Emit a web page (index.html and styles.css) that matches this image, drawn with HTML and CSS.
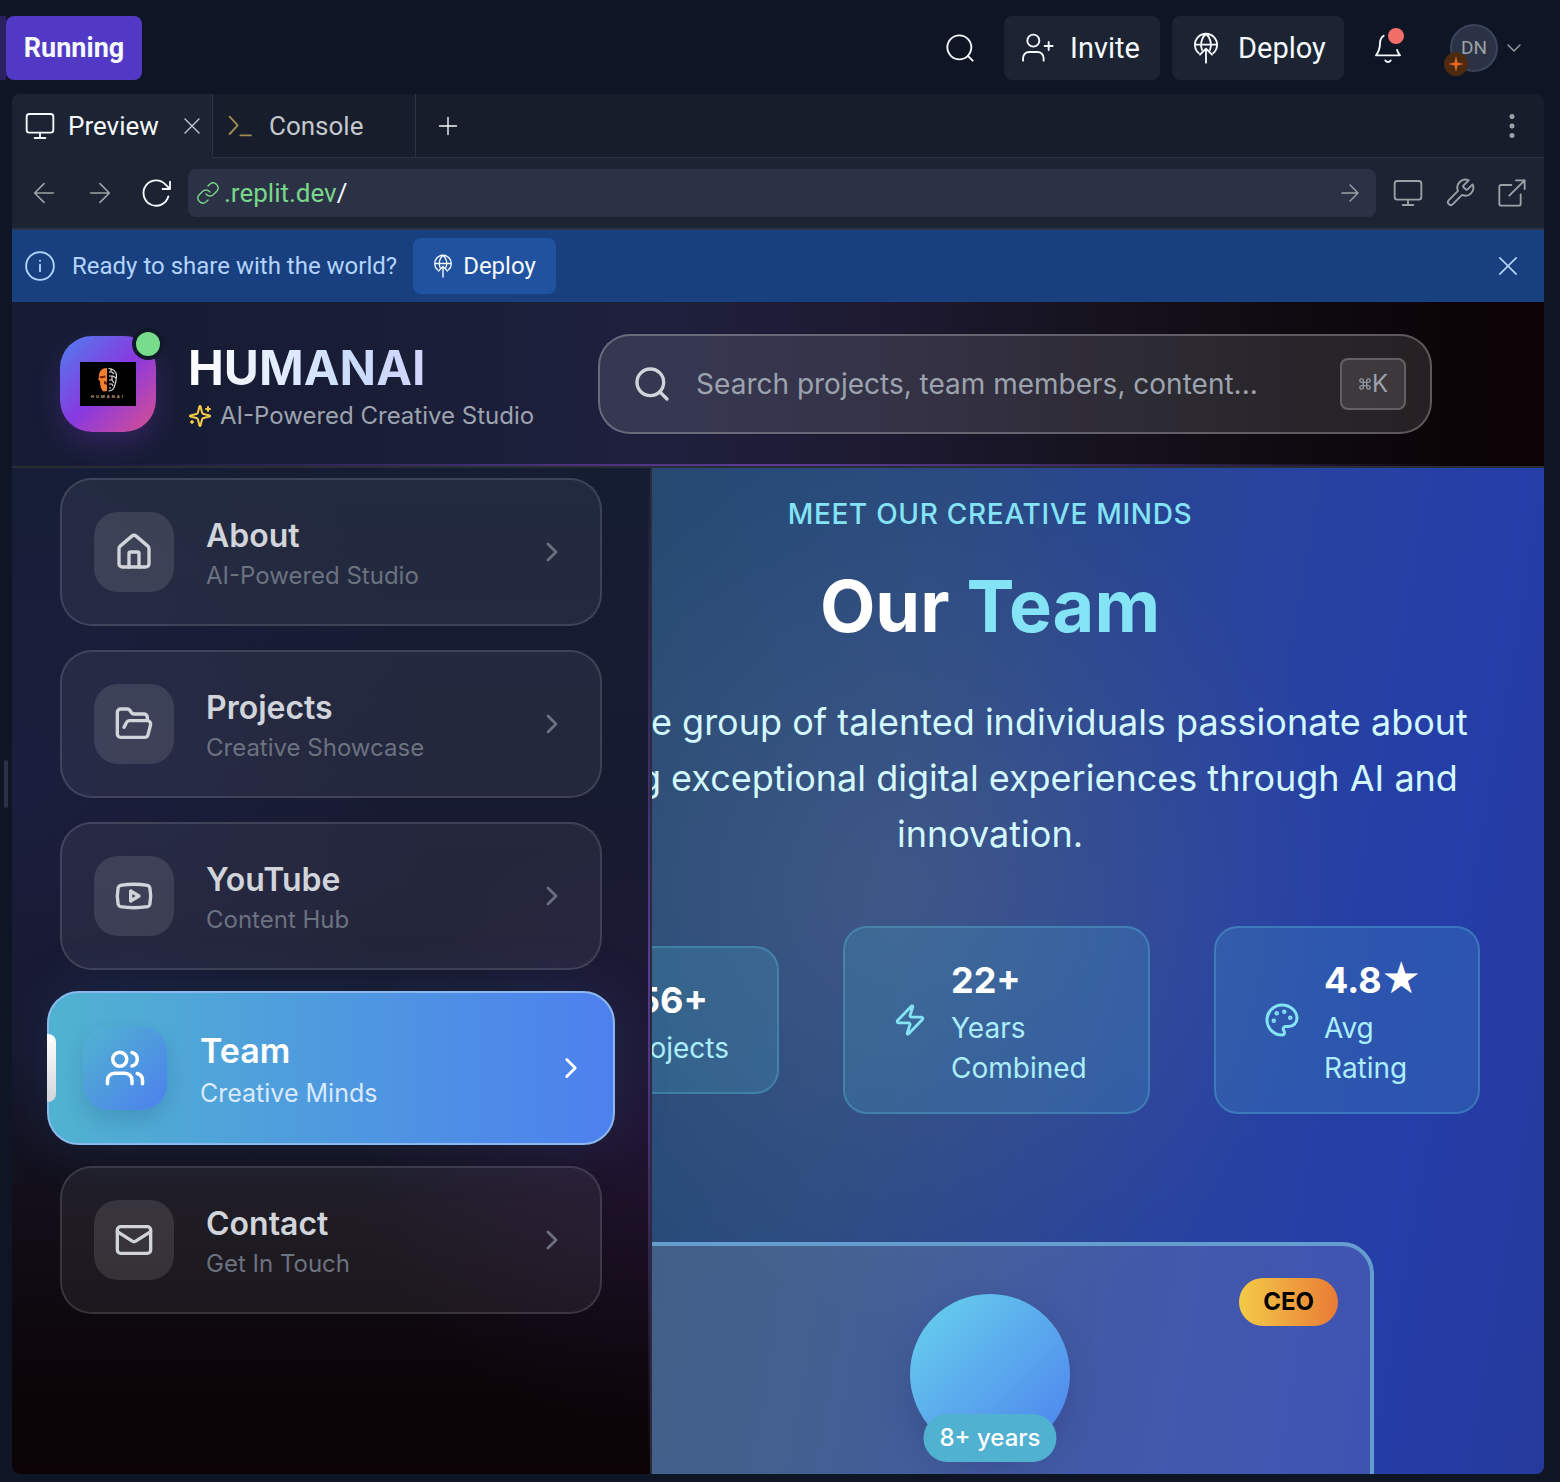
FILE: index.html
```html
<!DOCTYPE html>
<html lang="en">
<head>
<meta charset="utf-8">
<title>HumanAI preview</title>
<link rel="stylesheet" href="styles.css">
</head>
<body>
<svg class="defs" aria-hidden="true">
  <symbol id="i-search" viewBox="0 0 24 24"><circle cx="11" cy="11" r="8"/><path d="m21 21-4.3-4.3"/></symbol>
  <symbol id="i-find" viewBox="0 0 24 24"><circle cx="11.500" cy="11.500" r="9"/><path d="m21.500 21.500-3.600-3.600"/></symbol>
  <symbol id="i-monitor" viewBox="0 0 24 24"><rect x="2" y="3" width="20" height="14" rx="2"/><path d="M8 21h8M12 17v4"/></symbol>
  <symbol id="i-chevron" viewBox="0 0 24 24"><path d="m9 18 6-6-6-6"/></symbol>
  <symbol id="i-x" viewBox="0 0 24 24"><path d="M5 5l14 14M19 5L5 19"/></symbol>
  <symbol id="i-arrow" viewBox="0 0 24 24"><path d="M4 12h16M12 4l8 8-8 8"/></symbol>
  <symbol id="i-deploy" viewBox="0 0 24 24"><path d="M6.500 15.800A8.300 8.300 0 1 1 17.500 15.800M3.800 9.500h16.400M9 13.500c-1.600-4-.5-9 3-12.200 3.500 3.200 4.600 8.200 3 12.200M12 23V12.500M7.500 17 12 12.500l4.500 4.500"/></symbol>
</svg>

<header class="topbar">
  <span class="strip"></span>
  <button class="running" type="button">Running</button>
  <div class="actions">
    <button class="plain" type="button" aria-label="Search"><svg class="ic s32 thin"><use href="#i-find"/></svg></button>
    <button class="tool invite" type="button"><svg class="ic s32 thin" viewBox="0 0 24 24"><circle cx="8.500" cy="6.500" r="4.500"/><path d="M.8 21.500v-2a4.500 4.500 0 0 1 4.500-4.500h6.400a4.500 4.500 0 0 1 4.500 4.500v2M20 7.500v6M17 10.500h6"/></svg>Invite</button>
    <button class="tool publish" type="button"><svg class="ic s32 thin"><use href="#i-deploy"/></svg>Deploy</button>
    <button class="plain bell" type="button" aria-label="Notifications"><svg class="ic s32 thin" viewBox="0 0 24 24"><path d="M8.800 2.800C7 4 6 6 6 8.500c0 4-1 6.500-3 9h18c-1-1.200-1.800-2.500-2.200-4M10 21.300c1 1.600 3 1.600 4 0"/></svg><i class="alert"></i></button>
    <button class="account" type="button"><span class="avatar">DN<svg class="spark" viewBox="0 0 24 24"><circle cx="12" cy="12" r="12"/><path d="M12 4l1.500 6.500L20 12l-6.500 1.500L12 20l-1.500-6.500L4 12l6.500-1.500z"/></svg></span><svg class="ic s24 thin down"><use href="#i-chevron"/></svg></button>
  </div>
</header>

<div class="workspace">
<div class="pane">
  <div class="tabs">
    <button class="tab active" type="button"><svg class="ic s32 thin"><use href="#i-monitor"/></svg>Preview<svg class="ic s24 thin close"><use href="#i-x"/></svg></button>
    <button class="tab" type="button"><svg class="ic s32 thin prompt" viewBox="0 0 24 24"><path d="M3.500 5l6 6.500-6 6.500M11.500 19h8"/></svg>Console</button>
    <button class="add" type="button" aria-label="New tab"><svg class="ic s24 thin" viewBox="0 0 24 24"><path d="M12 3.500v17M3.500 12h17"/></svg></button>
    <button class="more" type="button" aria-label="More"><svg class="s32" viewBox="0 0 32 32" fill="currentColor"><circle cx="16" cy="6.500" r="2.500"/><circle cx="16" cy="16" r="2.500"/><circle cx="16" cy="25.500" r="2.500"/></svg></button>
  </div>
  <div class="urlbar">
    <button class="nav dim" type="button" aria-label="Back"><svg class="ic s28 thin flip"><use href="#i-arrow"/></svg></button>
    <button class="nav dim" type="button" aria-label="Forward"><svg class="ic s28 thin"><use href="#i-arrow"/></svg></button>
    <button class="nav" type="button" aria-label="Reload"><svg class="ic s32 thin" viewBox="0 0 24 24"><path d="M21.300 14.500A9.500 9.500 0 1 1 19 5.500l3.500 3.500M22.500 3.500V9H17"/></svg></button>
    <a class="address" href="#"><svg class="ic s24 thin" viewBox="0 0 24 24"><path d="M10 13a5 5 0 0 0 7.500.5l3.500-3.500a5 5 0 0 0-7-7l-2 2M14 11a5 5 0 0 0-7.500-.5L3 14a5 5 0 0 0 7 7l2-2"/></svg><span class="url">.replit.dev<b>/</b></span><svg class="ic s24 thin go"><use href="#i-arrow"/></svg></a>
    <div class="tools">
    <button class="nav small" type="button" aria-label="Devices"><svg class="ic s32 thin"><use href="#i-monitor"/></svg></button>
    <button class="nav small" type="button" aria-label="Tools"><svg class="ic s32 thin" viewBox="0 0 24 24"><path d="M14.700 6.300a1 1 0 0 0 0 1.400l1.600 1.600a1 1 0 0 0 1.400 0l3.770-3.770a6 6 0 0 1-7.940 7.940l-6.910 6.910a2.120 2.120 0 0 1-3-3l6.910-6.910a6 6 0 0 1 7.940-7.940l-3.760 3.760z"/></svg></button>
    <button class="nav small" type="button" aria-label="Open in new tab"><svg class="ic s32 thin" viewBox="0 0 24 24"><path d="M18.500 13v7a1.500 1.500 0 0 1-1.500 1.500H4A1.500 1.500 0 0 1 2.500 20V7.500A1.500 1.500 0 0 1 4 6h7.500M15 2.500h6.500V9M10 14 21.500 2.500"/></svg></button>
    </div>
  </div>
  <div class="banner">
    <svg class="ic s32 thin" viewBox="0 0 24 24"><circle cx="12" cy="12" r="10.400"/><path d="M12 11v5M12 8v.2"/></svg>
    <span>Ready to share with the world?</span>
    <button class="deploy" type="button"><svg class="ic s24 thin"><use href="#i-deploy"/></svg>Deploy</button>
    <button class="dismiss" type="button" aria-label="Dismiss"><svg class="ic s28 thin"><use href="#i-x"/></svg></button>
  </div>

  <div class="app">
    <header class="apphead">
      <div class="logo">
        <svg viewBox="0 0 56 44"><rect width="56" height="44"/><path d="M27 6c-5 0-8 3-8 8 0 2-1 3-.5 4l1.500 1c0 4 1 9 3.500 10.500L27 29z" fill="#f08030"/><path d="M19.500 14.500l6-1v2l-5 1zM24 19l3 1v3l-3-1z" fill="#70200c"/><path d="M28.500 6.500c4 0 8 2.500 8 7.500 0 5-1 8-2.500 11.500-1 2-3 3.500-5.500 3.500M29 10h3l2 2M29 14h4l3 2M29 18h3l2 3M29 22h3l1 2M31 7v3M32 14v4M29 26h2" fill="none" stroke="#ddd" stroke-width="1.200"/><text x="28" y="36" text-anchor="middle">HUMANAI</text></svg>
        <i class="online"></i>
      </div>
      <div class="brand">
        <h1>HUMANAI</h1>
        <p><svg class="ic s24" viewBox="0 0 24 24"><path d="M9.940 15.500A2 2 0 0 0 8.500 14.060l-6.140-1.580a.5.5 0 0 1 0-.96L8.500 9.940A2 2 0 0 0 9.940 8.500l1.580-6.140a.5.5 0 0 1 .96 0L14.060 8.500A2 2 0 0 0 15.500 9.940l6.140 1.580a.5.5 0 0 1 0 .96L15.500 14.060a2 2 0 0 0-1.440 1.440l-1.580 6.140a.5.5 0 0 1-.96 0zM20 3v4M22 5h-4M4 17v2M5 18H3"/></svg>AI-Powered Creative Studio</p>
      </div>
      <label class="search">
        <svg class="ic s40"><use href="#i-search"/></svg>
        <input type="text" aria-label="Search" placeholder="Search projects, team members, content...">
        <kbd><svg class="ic cmd" viewBox="0 0 24 24"><path d="M15 6v12a3 3 0 1 0 3-3H6a3 3 0 1 0 3 3V6a3 3 0 1 0-3 3h12a3 3 0 1 0-3-3"/></svg>K</kbd>
      </label>
    </header>

    <div class="body">
      <nav class="side">
        <a class="item" href="#"><span class="box"><svg class="ic s40" viewBox="0 0 24 24"><path d="M15 21v-8a1 1 0 0 0-1-1h-4a1 1 0 0 0-1 1v8"/><path d="M3 10a2 2 0 0 1 .7-1.530l7-6a2 2 0 0 1 2.600 0l7 6A2 2 0 0 1 21 10v9a2 2 0 0 1-2 2H5a2 2 0 0 1-2-2z"/></svg></span><span class="label"><strong>About</strong><small>AI-Powered Studio</small></span><svg class="ic s32 chev"><use href="#i-chevron"/></svg></a>
        <a class="item" href="#"><span class="box"><svg class="ic s40" viewBox="0 0 24 24"><path d="m6 14 1.500-2.900A2 2 0 0 1 9.240 10H20a2 2 0 0 1 1.940 2.500l-1.540 6a2 2 0 0 1-1.950 1.500H4a2 2 0 0 1-2-2V5a2 2 0 0 1 2-2h3.900a2 2 0 0 1 1.690.9l.81 1.200a2 2 0 0 0 1.670.9H18a2 2 0 0 1 2 2v2"/></svg></span><span class="label"><strong>Projects</strong><small>Creative Showcase</small></span><svg class="ic s32 chev"><use href="#i-chevron"/></svg></a>
        <a class="item" href="#"><span class="box"><svg class="ic s40" viewBox="0 0 24 24"><path d="M2.500 17a24.120 24.120 0 0 1 0-10 2 2 0 0 1 1.400-1.400 49.560 49.560 0 0 1 16.200 0A2 2 0 0 1 21.500 7a24.120 24.120 0 0 1 0 10 2 2 0 0 1-1.400 1.400 49.550 49.550 0 0 1-16.200 0A2 2 0 0 1 2.500 17"/><path d="m10 15 5-3-5-3z"/></svg></span><span class="label"><strong>YouTube</strong><small>Content Hub</small></span><svg class="ic s32 chev"><use href="#i-chevron"/></svg></a>
        <a class="item current" href="#" aria-current="page"><span class="box"><svg class="ic s42" viewBox="0 0 24 24"><path d="M16 21v-2a4 4 0 0 0-4-4H6a4 4 0 0 0-4 4v2"/><circle cx="9" cy="7" r="4"/><path d="M22 21v-2a4 4 0 0 0-3-3.870M16 3.130a4 4 0 0 1 0 7.750"/></svg></span><span class="label"><strong>Team</strong><small>Creative Minds</small></span><svg class="ic s34 chev"><use href="#i-chevron"/></svg></a>
        <a class="item" href="#"><span class="box"><svg class="ic s40" viewBox="0 0 24 24"><rect x="2" y="4" width="20" height="16" rx="2"/><path d="m22 7-8.970 5.700a1.940 1.940 0 0 1-2.060 0L2 7"/></svg></span><span class="label"><strong>Contact</strong><small>Get In Touch</small></span><svg class="ic s32 chev"><use href="#i-chevron"/></svg></a>
      </nav>

      <main class="main">
        <p class="eyebrow">MEET OUR CREATIVE MINDS</p>
        <h2>Our <em>Team</em></h2>
        <p class="lead">A diverse group of talented individuals passionate about creating exceptional digital experiences through AI and innovation.</p>
        <div class="stats">
          <div class="stat"><svg class="ic s36" viewBox="0 0 24 24"><circle cx="12" cy="12" r="10"/><circle cx="12" cy="12" r="5"/></svg><p><b>156+</b>Projects</p></div>
          <div class="stat"><svg class="ic s34" viewBox="0 0 24 24"><path d="M4 14a1 1 0 0 1-.78-1.630l9.900-10.200a.5.5 0 0 1 .86.460l-1.920 6.020A1 1 0 0 0 13 10h7a1 1 0 0 1 .78 1.630l-9.900 10.200a.5.5 0 0 1-.86-.460l1.920-6.020A1 1 0 0 0 11 14z"/></svg><p><b>22+</b>Years Combined</p></div>
          <div class="stat"><svg class="ic s36" viewBox="0 0 24 24"><g fill="currentColor"><circle cx="13.500" cy="6.500" r=".5"/><circle cx="17.500" cy="10.500" r=".5"/><circle cx="8.500" cy="7.500" r=".5"/><circle cx="6.500" cy="12.500" r=".5"/></g><path d="M12 2C6.500 2 2 6.500 2 12s4.500 10 10 10c.93 0 1.650-.75 1.650-1.690 0-.44-.18-.83-.44-1.120-.29-.29-.44-.65-.44-1.130a1.640 1.640 0 0 1 1.670-1.670h2c3.050 0 5.550-2.500 5.550-5.550C22 6.010 17.460 2 12 2z"/></svg><p><b>4.8<span class="star">★</span></b>Avg<br>Rating</p></div>
        </div>
        <article class="profile">
          <span class="role">CEO</span>
          <div class="photo"><span class="years">8+ years</span></div>
        </article>
      </main>
    </div>
  </div>
</div>
</div>
</body>
</html>
```
FILE: styles.css
```css
* { box-sizing: border-box; }
body {
  margin: 0;
  height: 100vh;
  display: flex;
  flex-direction: column;
  overflow: hidden;
  background: #0e1525;
  color: #f5f9fc;
  font: 26px/32px Roboto, "Noto Sans", sans-serif;
}
h1, h2, p { margin: 0; }
button { font: inherit; color: inherit; background: none; border: 0; padding: 0; cursor: pointer; }
a { color: inherit; text-decoration: none; }
.defs { position: absolute; width: 0; height: 0; }
.ic { fill: none; stroke: currentColor; stroke-width: 2; stroke-linecap: round; stroke-linejoin: round; flex: none; }
.thin { stroke-width: 1.4; }
.s24 { width: 24px; height: 24px; }
.s28 { width: 28px; height: 28px; }
.s32 { width: 32px; height: 32px; }
.s34 { width: 34px; height: 34px; }
.s36 { width: 36px; height: 36px; }
.s40 { width: 40px; height: 40px; }
.s42 { width: 42px; height: 42px; }
.flip { transform: rotate(180deg); }
.down { transform: rotate(90deg); }

/* Workspace top bar */
.topbar { display: flex; height: 94px; padding: 16px 34px 14px 0; flex: none; }
.strip { width: 6px; height: 64px; background: #2b2160; }
.running { width: 136px; height: 64px; border-radius: 8px; background: #5139c6; font-size: 27px; font-weight: 700; }
.actions { display: flex; align-items: center; gap: 12px; margin-left: auto; height: 64px; }
.plain { width: 64px; height: 64px; display: grid; place-items: center; position: relative; }
.tool { display: flex; align-items: center; gap: 16px; height: 64px; padding: 0 18px; border-radius: 8px; background: #1c2333; font-size: 29px; }
.invite { width: 156px; }
.publish { width: 172px; }
.alert { position: absolute; right: 16px; top: 12px; width: 16px; height: 16px; border-radius: 50%; background: #ef6e68; }
.account { display: flex; align-items: center; gap: 4px; margin-left: 18px; color: #9da2a6; }
.avatar { position: relative; display: grid; place-items: center; width: 48px; height: 48px; border: 2px solid #3c445c; border-radius: 50%; background: #2b3245; font-size: 19px; }
.spark { position: absolute; left: -8px; bottom: -6px; width: 24px; height: 24px; }
.spark circle { fill: #4b2a10; }
.spark path { fill: #e8672c; }

/* Preview pane */
.workspace { flex: 1; min-height: 0; display: flex; padding: 0 16px 8px 12px; position: relative; }
.workspace::before { content: ""; position: absolute; left: 4px; top: 666px; width: 4px; height: 48px; border-radius: 2px; background: #2b3245; }
.pane { flex: 1; min-width: 0; display: flex; flex-direction: column; overflow: hidden; border-radius: 8px; background: #1c2333; }
.tabs { display: flex; height: 64px; flex: none; background: #171d2b; }
.tab { display: flex; align-items: center; gap: 12px; width: 203px; padding: 0 12px; border-right: 1px solid #2b3245; border-bottom: 1px solid #2b3245; color: #c2c8cc; }
.tab.active { width: 201px; background: #1c2333; border-bottom-color: #1c2333; color: #f5f9fc; }
.close { margin-left: auto; margin-right: -4px; color: #c2c8cc; }
.prompt { color: #a08c50; }
.add, .more { width: 64px; display: grid; place-items: center; border-bottom: 1px solid #2b3245; }
.more { flex: 1; justify-items: end; padding-right: 16px; color: #9da2a6; }
.urlbar { display: flex; align-items: center; height: 72px; flex: none; padding: 0 6px 0 4px; border-bottom: 2px solid #2b3245; }
.nav { width: 56px; height: 56px; display: grid; place-items: center; }
.nav.small { width: 52px; }
.dim, .tools { color: #9da2a6; }
.tools { display: flex; margin-left: 6px; }
.address { display: flex; align-items: center; gap: 4px; flex: 1; height: 48px; margin-left: 4px; padding: 0 14px 0 8px; border-radius: 8px; background: #2b3245; color: #7ad68a; }
.url b { font-weight: 400; color: #f5f9fc; }
.go { margin-left: auto; color: #9da2a6; }
.banner { display: flex; align-items: center; gap: 16px; height: 72px; flex: none; padding: 0 22px 0 12px; background: #18407e; color: #b2d4ff; font-size: 24px; }
.deploy { display: flex; align-items: center; gap: 8px; height: 56px; min-width: 143px; padding: 0 18px; border-radius: 8px; background: #2052a0; color: #f5f9fc; }
.dismiss { display: flex; margin-left: auto; }

/* Previewed application */
.app { flex: 1; min-height: 0; display: flex; flex-direction: column; font-family: Inter, sans-serif; }
.apphead {
  position: relative; z-index: 3; display: flex; align-items: center; flex: none;
  padding: 32px 112px 32px 48px;
  border-bottom: 2px solid #2a2c36;
  background: linear-gradient(90deg, #151c33 0%, #181d35 20%, #1e203d 42%, #1d1930 58%, #15121d 72%, #0e0a10 84%, #0b0305 97%);
}
.apphead::after { content: ""; position: absolute; left: 0; right: 0; bottom: 0; height: 2px; background: linear-gradient(90deg, transparent 5%, #5d3a97 50%, transparent 95%); }
.logo { position: relative; display: grid; place-items: center; width: 96px; height: 96px; border-radius: 32px; background: linear-gradient(135deg, #4f7fee, #8839e0 50%, #d9508e); box-shadow: 0 12px 28px #8839e040; }
.logo svg { width: 56px; height: 44px; }
.logo text { font: 700 4px Inter, sans-serif; fill: #c8a888; letter-spacing: 2px; }
.online { position: absolute; right: -8px; top: -8px; width: 32px; height: 32px; border: 4px solid #111827; border-radius: 50%; background: #79dc8c; }
.brand { margin: 0 64px 0 32px; white-space: nowrap; }
.brand h1 { width: max-content; font-size: 48px; line-height: 64px; font-weight: 700; background: linear-gradient(90deg, #fff, #c9dcfb 70%, #d3d5fc); -webkit-background-clip: text; background-clip: text; color: transparent; }
.brand p { display: flex; align-items: center; gap: 8px; font-size: 24px; line-height: 32px; color: #9ca3af; }
.brand p svg { color: #f5cc48; }
.search { flex: 1; min-width: 0; display: flex; align-items: center; gap: 24px; height: 100px; padding: 0 24px 0 32px; border: 2px solid #ffffff40; border-radius: 32px; background: #ffffff1c; color: #d1d5db; }
.search input { flex: 1; min-width: 0; padding: 0; border: 0; outline: 0; background: none; color: inherit; font: 28px/40px Inter, sans-serif; }
.search input::placeholder { color: #9ca3af; opacity: 1; }
.search kbd { display: flex; align-items: center; height: 52px; padding: 0 16px; border: 2px solid #ffffff33; border-radius: 8px; background: #ffffff1a; color: #9ca3af; font: 24px/32px Inter, sans-serif; }
.cmd { width: 14px; height: 14px; }

.body { flex: 1; min-height: 0; display: flex; overflow: hidden; }
.side {
  position: relative; z-index: 2; flex: none; width: 640px; display: flex; flex-direction: column; gap: 24px;
  padding: 10px 48px 0;
  border-right: 2px solid #2a2c3a;
  background:
    radial-gradient(circle at 100% 66%, #4a1d6a40, transparent 300px),
    radial-gradient(circle at 0 30%, #2425584d, transparent 420px),
    linear-gradient(180deg, #151d33 0%, #171a30 40%, #151629 58%, #110d16 76%, #0b0508 92%, #0b0305 100%);
}
.side::after { content: ""; position: absolute; right: 0; top: 0; bottom: 0; width: 2px; background: linear-gradient(transparent, #5d3a97 50%, transparent); }
.item { display: flex; align-items: center; gap: 32px; height: 148px; padding: 0 32px; border: 2px solid #ffffff1f; border-radius: 32px; background: #ffffff0f; }
.box { display: grid; place-items: center; width: 80px; height: 80px; border-radius: 24px; background: #ffffff1c; color: #d1d5db; }
.label { flex: 1; display: flex; flex-direction: column; }
.label strong { font-size: 32px; line-height: 48px; font-weight: 600; color: #d1d5db; }
.label small { font-size: 24px; line-height: 32px; color: #6b7280; }
.chev { color: #6b7280; }
.item.current { position: relative; gap: 33px; height: 154px; margin: -3px -13px; padding: 0 25px 0 34px; border-color: #8cb8f0; background: linear-gradient(90deg, #50b3d0, #4d80ee) border-box; box-shadow: 0 0 56px #2f6fa833; }
.item.current::before { content: ""; position: absolute; left: -2px; top: 41px; width: 9px; height: 68px; border-radius: 0 8px 8px 0; background: linear-gradient(#fff, #d1d5db); }
.current .box { width: 84px; height: 84px; border-radius: 26px; background: linear-gradient(135deg, #50b3d0, #4d80ee); box-shadow: 0 10px 20px #1a3f6a33; color: #fff; }
.current strong, .current .chev { color: #fff; }
.current strong { font-size: 34px; line-height: 50px; }
.current small { font-size: 25px; line-height: 34px; color: #dbeafe; }

.main {
  flex: 1; min-width: 0; margin-left: -216px; padding: 26px 64px 0;
  text-align: center; overflow: hidden;
  background:
    radial-gradient(circle at 42% 42%, #66709059, transparent 440px),
    linear-gradient(100deg, #254a70 15%, #294a80 40%, #2842a0 68%, #253da8 85%, #263a9c);
}
.eyebrow { font-size: 28px; line-height: 40px; font-weight: 500; letter-spacing: 0.025em; color: #84e3f5; }
.main h2 { margin: 32px 0 48px; font-size: 72px; line-height: 80px; font-weight: 700; color: #fff; }
.main em { font-style: normal; color: #84e3f5; }
.lead { font-size: 36px; line-height: 56px; color: #d3f8fd; }
.stats { display: grid; grid-template-columns: 279fr 307fr 266fr; align-items: center; gap: 64px; margin-top: 64px; }
.stat { display: flex; align-items: center; gap: 24px; padding: 24px 48px; border: 2px solid #5cc4e04d; border-radius: 24px; background: #4fc0dc2e; text-align: left; color: #84e3f5; }
.stat:first-child { justify-content: flex-end; }
.stat p { font-size: 28px; line-height: 40px; color: #aceefa; }
.stat b { display: block; font-size: 36px; line-height: 56px; color: #fff; }
.star { font-family: "DejaVu Sans", sans-serif; font-size: 44px; font-weight: 400; line-height: 0; }
.profile { position: relative; width: 768px; height: 720px; margin: 128px auto 0; padding-top: 48px; border: 4px solid #659dcf; border-radius: 32px; background: #ffffff1f; }
.role { position: absolute; right: 32px; top: 32px; padding: 8px 24px; border-radius: 24px; background: linear-gradient(90deg, #f3cb48, #e97b35); color: #000; font-size: 24px; line-height: 32px; font-weight: 700; }
.photo { position: relative; width: 160px; height: 160px; margin: 0 auto; border-radius: 50%; background: linear-gradient(135deg, #67d3ec, #4d80ee); box-shadow: 0 16px 32px #1a2a6040; }
.years { position: absolute; left: 50%; bottom: -8px; transform: translateX(-50%); padding: 8px 16px; border-radius: 24px; background: #50b1d0; color: #fff; font-size: 24px; line-height: 32px; font-weight: 500; white-space: nowrap; }
```
